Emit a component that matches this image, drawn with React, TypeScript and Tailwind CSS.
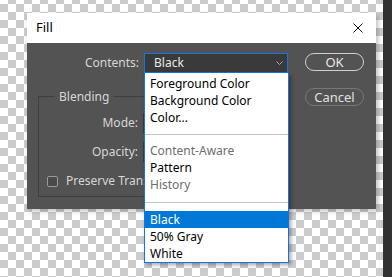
import React from 'react';

const font = { fontFamily: '"Noto Sans", "Open Sans", sans-serif' };

interface MenuItem {
  label: string;
  disabled?: boolean;
  selected?: boolean;
}

const groupA: MenuItem[] = [
  { label: 'Foreground Color' },
  { label: 'Background Color' },
  { label: 'Color...' },
];

const groupB: MenuItem[] = [
  { label: 'Content-Aware', disabled: true },
  { label: 'Pattern' },
  { label: 'History', disabled: true },
];

const groupC: MenuItem[] = [
  { label: 'Black', selected: true },
  { label: '50% Gray' },
  { label: 'White' },
];

const Item: React.FC<{ item: MenuItem }> = ({ item }) => (
  <div
    className={
      'h-[17px] pl-[5px] text-[12px] leading-[17px] ' +
      (item.selected ? 'bg-[#0078d7] text-white' : item.disabled ? 'text-[#6d6d6d]' : 'text-black')
    }
  >
    {item.label}
  </div>
);

export default function App() {
  return (
    <div
      className="relative w-[392px] h-[277px] overflow-hidden bg-[repeating-conic-gradient(#cccccc_0_25%,#ffffff_0_50%)] bg-[length:16px_16px] bg-[position:0px_-4px]"
      style={font}
    >
      {/* right edge of the workspace */}
      <div className="absolute right-0 top-0 h-full w-[9px] bg-[#323232]" />

      {/* Fill dialog */}
      <div className="absolute left-[27px] top-[13px] w-[349px] shadow-[2px_2px_5px_rgba(0,0,0,0.25)]">
        <div className="h-[30px] bg-white flex items-center justify-between pl-[9px] pr-[12px]">
          <span className="text-[13px] text-black">Fill</span>
          <svg width="10" height="10" viewBox="0 0 10 10" className="mr-[1px]">
            <path d="M0.5 0.5 L9.5 9.5 M9.5 0.5 L0.5 9.5" stroke="#111" strokeWidth="1" />
          </svg>
        </div>

        <div className="h-[166px] bg-[#535353] flex">
          <div className="w-[261px] pt-[10px]">
            <div className="flex items-center h-[20px]">
              <span className="w-[112px] text-right text-[12px] text-[#d6d6d6]">Contents:</span>
              <div className="ml-[5px] w-[144px] h-[20px] border border-[#1473e6] bg-[#3a3a3a] flex items-center justify-between pl-[9px] pr-[4px]">
                <span className="text-[12px] text-[#e8e8e8]">Black</span>
                <svg width="7" height="4" viewBox="0 0 7 4">
                  <path d="M0.5 0.5 L3.5 3.5 L6.5 0.5" fill="none" stroke="#aaaaaa" strokeWidth="1" />
                </svg>
              </div>
            </div>

            <div className="relative ml-[11px] mt-[23px] w-[248px] h-[101px] border border-[#3f3f3f] pt-[16px]">
              <span className="absolute -top-[9px] left-[16px] px-[4px] bg-[#535353] text-[12px] text-[#d6d6d6]">
                Blending
              </span>
              <div className="flex flex-col gap-[9px]">
                <div className="flex items-center h-[20px]">
                  <span className="w-[99px] text-right text-[12px] text-[#d6d6d6]">Mode:</span>
                  <div className="ml-[5px] w-[130px] h-[20px] border border-[#3a3a3a] bg-[#454545]" />
                </div>
                <div className="flex items-center h-[20px]">
                  <span className="w-[99px] text-right text-[12px] text-[#d6d6d6]">Opacity:</span>
                  <div className="ml-[5px] w-[50px] h-[20px] border border-[#3a3a3a] bg-[#454545]" />
                </div>
                <div className="flex items-center h-[20px] pl-[8px] w-[105px] overflow-hidden">
                  <span className="shrink-0 w-[11px] h-[11px] rounded-[2px] border border-[#9a9a9a] bg-[#4a4a4a]" />
                  <span className="ml-[8px] text-[12px] text-[#d6d6d6] whitespace-nowrap">Preserve Transparency</span>
                </div>
              </div>
            </div>
          </div>

          <div className="ml-[17px] pt-[10px] flex flex-col gap-[17px]">
            <button className="w-[59px] h-[18px] rounded-full border-[1.5px] border-[#cfcfcf] text-[13px] leading-none text-[#e8e8e8]">
              OK
            </button>
            <button className="w-[59px] h-[18px] rounded-full border border-[#777777] text-[13px] leading-none text-[#e0e0e0]">
              Cancel
            </button>
          </div>
        </div>
      </div>

      {/* open Contents list */}
      <div className="absolute left-[144px] top-[73px] w-[145px] bg-white border-x border-b border-[#1473e6] pt-[2px] shadow-[2px_2px_4px_rgba(0,0,0,0.35)]">
        {groupA.map((i) => (
          <Item key={i.label} item={i} />
        ))}
        <div className="h-[16px] flex flex-col justify-center">
          <div className="h-px bg-[#c4c4c4]" />
        </div>
        {groupB.map((i) => (
          <Item key={i.label} item={i} />
        ))}
        <div className="h-[18px] flex flex-col justify-center">
          <div className="h-px bg-[#c4c4c4]" />
        </div>
        {groupC.map((i) => (
          <Item key={i.label} item={i} />
        ))}
      </div>
    </div>
  );
}
